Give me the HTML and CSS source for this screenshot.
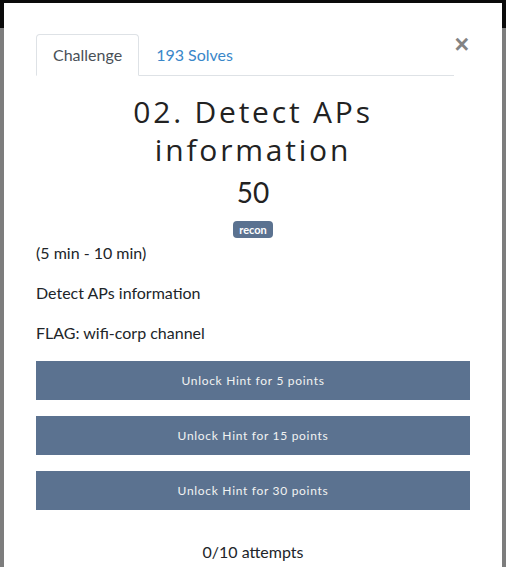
FILE: index.html
```html
<!DOCTYPE html>
<html>
<head>
<meta charset="utf-8">
<link rel="stylesheet" href="styles.css">
</head>
<body>
<div class="modal">
  <div class="head">
    <ul class="tabs">
      <li class="tab active">Challenge</li>
      <li class="tab link">193 Solves</li>
    </ul>
    <span class="close">&times;</span>
  </div>
  <h2 class="title">02. Detect APs information</h2>
  <h3 class="value">50</h3>
  <div class="tags"><span class="badge">recon</span></div>
  <div class="desc">
    <p>(5 min - 10 min)</p>
    <p>Detect APs information</p>
    <p>FLAG: wifi-corp channel</p>
  </div>
  <div class="hints">
    <button class="hint">Unlock Hint for 5 points</button>
    <button class="hint">Unlock Hint for 15 points</button>
    <button class="hint">Unlock Hint for 30 points</button>
  </div>
  <p class="attempts">0/10 attempts</p>
</div>
</body>
</html>
```
FILE: styles.css
```css
html, body {
  margin: 0;
  padding: 0;
  height: 100%;
  overflow: hidden;
}
body {
  background: linear-gradient(#0b0b0b 0, #0b0b0b 28px, #7d7d7d 28px);
  font-family: Lato, "Liberation Sans", sans-serif;
  color: #212529;
}
.modal {
  background: #fff;
  margin: 3px 0 0 4px;
  width: 498px;
  box-sizing: border-box;
  padding: 31px 32px 40px;
  min-height: 600px;
}
.head {
  display: flex;
  align-items: flex-start;
}
.tabs {
  list-style: none;
  margin: 0;
  padding: 0;
  display: flex;
  width: 420px;
  border-bottom: 1px solid #dee2e6;
}
.tab {
  font-size: 16px;
  line-height: 24px;
  padding: 8px 16px;
  border: 1px solid transparent;
  border-radius: 4px 4px 0 0;
  margin-bottom: -1px;
}
.tab.active {
  color: #495057;
  border-color: #dee2e6 #dee2e6 #fff;
  background: #fff;
}
.tab.link {
  color: #3a87c9;
}
.close {
  margin-left: auto;
  margin-right: 1px;
  font-size: 25px;
  line-height: 20px;
  font-weight: 700;
  color: #838383;
  font-family: "Liberation Sans", sans-serif;
}
.title {
  font-family: "Open Sans", sans-serif;
  font-weight: 400;
  font-size: 30px;
  line-height: 38px;
  letter-spacing: 2.8px;
  text-align: center;
  margin: 17px 0 0;
  padding: 0 50px;
  color: #222;
}
.value {
  font-family: Lato, sans-serif;
  font-weight: 400;
  font-size: 28px;
  line-height: 36px;
  text-align: center;
  margin: 5px 0 0;
  color: #222;
}
.tags {
  text-align: center;
  margin-top: 9px;
  line-height: 17px;
}
.badge {
  display: inline-block;
  background: #5b7290;
  color: #fff;
  font-weight: 700;
  font-size: 11px;
  line-height: 17px;
  padding: 0 6px;
  border-radius: 4px;
}
.desc {
  font-size: 16px;
  line-height: 24px;
  margin-top: 3px;
}
.desc p {
  margin: 0 0 16px;
}
.hints {
  display: flex;
  flex-direction: column;
  gap: 16.5px;
  margin-top: 1px;
}
.hint {
  display: block;
  width: 100%;
  height: 38.5px;
  border: 0;
  border-radius: 0;
  background: #5b7290;
  color: #f2f2f2;
  font-family: Lato, sans-serif;
  font-size: 12px;
  letter-spacing: 0.7px;
  padding: 0;
}
.attempts {
  text-align: center;
  font-size: 16px;
  line-height: 24px;
  margin: 30px 0 0;
}
```
